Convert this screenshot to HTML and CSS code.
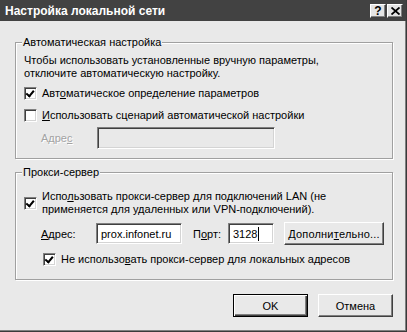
FILE: index.html
```html
<!DOCTYPE html>
<html lang="ru">
<head>
    <meta charset="UTF-8">
    <title>Настройка локальной сети</title>
    <link rel="stylesheet" href="styles.css">
</head>
<body>
    <div class="window">
        <div class="titlebar">
            <span class="title">Настройка локальной сети</span>
            <div class="caption-btns">
                <span class="cbtn help">?</span>
                <span class="cbtn close">
                    <svg width="9" height="8" viewBox="0 0 9 8">
                        <path d="M0.5 0.5 L8.5 7.5 M8.5 0.5 L0.5 7.5" stroke="#000" stroke-width="1.8" fill="none"/>
                    </svg>
                </span>
            </div>
        </div>

        <div class="content">
            <fieldset class="group group-auto">
                <legend>Автоматическая настройка</legend>
                <p class="note">Чтобы использовать установленные вручную параметры,<br>отключите автоматическую настройку.</p>
                <div class="check">
                    <span class="box checked"></span>
                    <span>Авт<u>о</u>матическое определение параметров</span>
                </div>
                <div class="check">
                    <span class="box"></span>
                    <span><u>И</u>спользовать сценарий автоматической настройки</span>
                </div>
                <div class="addr-row">
                    <span class="addr-label disabled">Адре<u>с</u></span>
                    <span class="field field-off"></span>
                </div>
            </fieldset>

            <fieldset class="group group-proxy">
                <legend>Прокси-сервер</legend>
                <div class="check check-tall">
                    <span class="box checked"></span>
                    <span>Испо<u>л</u>ьзовать прокси-сервер для подключений LAN (не<br>применяется для удаленных или VPN-подключений).</span>
                </div>
                <div class="proxy-row">
                    <span class="proxy-label"><u>А</u>дрес:</span>
                    <span class="field field-host">prox.infonet.ru</span>
                    <span class="port-label">П<u>о</u>рт:</span>
                    <span class="field field-port">3128<span class="caret"></span></span>
                    <span class="btn btn-more">Дополни<u>т</u>ельно...</span>
                </div>
                <div class="check check-sub">
                    <span class="box checked"></span>
                    <span>Не использо<u>в</u>ать прокси-сервер для локальных адресов</span>
                </div>
            </fieldset>

            <div class="footer">
                <span class="btn btn-default">OK</span>
                <span class="btn">Отмена</span>
            </div>
        </div>
    </div>
</body>
</html>
```

FILE: styles.css
```css
body {
    margin: 0;
    font-family: "Liberation Sans", Arial, sans-serif;
    font-size: 11px;
    color: #000;
    background: #e9e9e9;
}

.window {
    width: 407px;
    height: 332px;
    box-sizing: border-box;
    background: #e9e9e9;
    border-right: 1px solid #3a3a3a;
    border-bottom: 1px solid #3a3a3a;
    box-shadow: inset -1px -1px 0 #808080;
    display: flex;
    flex-direction: column;
}

/* заголовок окна */
.titlebar {
    height: 21px;
    background: #424242;
    display: flex;
    align-items: center;
    justify-content: space-between;
    padding: 0 3px 0 5px;
}

.title {
    color: #fff;
    font-weight: bold;
    font-size: 12px;
}

.caption-btns {
    display: flex;
    gap: 1px;
}

.cbtn {
    width: 16px;
    height: 14px;
    box-sizing: border-box;
    background: #e4e4e4;
    border-top: 1px solid #fff;
    border-left: 1px solid #fff;
    border-right: 1px solid #404040;
    border-bottom: 1px solid #404040;
    box-shadow: inset -1px -1px 0 #808080;
    display: flex;
    align-items: center;
    justify-content: center;
    font-weight: bold;
    font-size: 12px;
    line-height: 12px;
}

.content {
    flex: 1;
    padding: 14px 13px 0 15px;
    display: flex;
    flex-direction: column;
}

/* группы */
.group {
    margin: 0;
    padding: 0 8px;
    border: 1px solid #a0a0a0;
    box-shadow: inset 1px 1px 0 #fff, 1px 1px 0 #fff;
    min-width: 0;
}

.group legend {
    padding: 0 1px;
    margin-left: -2px;
    line-height: 14px;
    background: #e9e9e9;
}

.group-auto {
    height: 124px;
    box-sizing: border-box;
}

.group-proxy {
    margin-top: 6px;
    height: 115px;
    box-sizing: border-box;
}

.note {
    margin: 5px 0 2px;
    line-height: 13px;
}

.check {
    display: flex;
    align-items: center;
    gap: 5px;
    height: 22px;
}

.check-tall {
    margin-top: 11px;
    height: 26px;
    line-height: 13px;
}

.check-sub {
    margin-left: 19px;
    margin-top: 3px;
}

.box {
    width: 13px;
    height: 13px;
    box-sizing: border-box;
    flex: none;
    background: #fff;
    border-top: 1px solid #808080;
    border-left: 1px solid #808080;
    border-right: 1px solid #fff;
    border-bottom: 1px solid #fff;
    box-shadow: inset 1px 1px 0 #404040, inset -1px -1px 0 #d4d4d4;
    position: relative;
}

.box.checked::after {
    content: "";
    position: absolute;
    left: 2px;
    top: 1px;
    width: 3px;
    height: 6px;
    border-right: 2px solid #000;
    border-bottom: 2px solid #000;
    transform: rotate(40deg);
    transform-origin: 60% 60%;
}

.addr-row {
    display: flex;
    align-items: center;
    margin-top: 1px;
    padding-left: 17px;
}

.addr-label {
    width: 56px;
}

.disabled {
    color: #a3a3a3;
    text-shadow: 1px 1px 0 #fff;
}

.field {
    height: 21px;
    box-sizing: border-box;
    background: #fff;
    border-top: 1px solid #808080;
    border-left: 1px solid #808080;
    border-right: 1px solid #fff;
    border-bottom: 1px solid #fff;
    box-shadow: inset 1px 1px 0 #404040, inset -1px -1px 0 #d4d4d4;
    display: flex;
    align-items: center;
    padding-left: 4px;
}

.field-off {
    width: 178px;
    height: 22px;
    background: #e9e9e9;
}

.proxy-row {
    display: flex;
    align-items: center;
    margin-top: 6px;
    padding-left: 17px;
}

.proxy-label {
    width: 55px;
}

.field-host {
    width: 86px;
}

.port-label {
    margin-left: 11px;
    width: 35px;
}

.field-port {
    width: 46px;
}

.caret {
    display: inline-block;
    width: 1px;
    height: 14px;
    background: #000;
    margin-left: 1px;
}

/* кнопки */
.btn {
    height: 23px;
    box-sizing: border-box;
    background: #e9e9e9;
    border-top: 1px solid #fff;
    border-left: 1px solid #fff;
    border-right: 1px solid #404040;
    border-bottom: 1px solid #404040;
    box-shadow: inset -1px -1px 0 #808080;
    display: flex;
    align-items: center;
    justify-content: center;
    width: 75px;
}

.btn-more {
    margin-left: 10px;
    width: 100px;
    letter-spacing: 0.2px;
}

.btn-default {
    border: 1px solid #000;
    box-shadow: inset 1px 1px 0 #fff, inset -1px -1px 0 #404040, inset -2px -2px 0 #808080;
}

.footer {
    display: flex;
    justify-content: flex-end;
    gap: 10px;
    margin-top: 14px;
}
```
